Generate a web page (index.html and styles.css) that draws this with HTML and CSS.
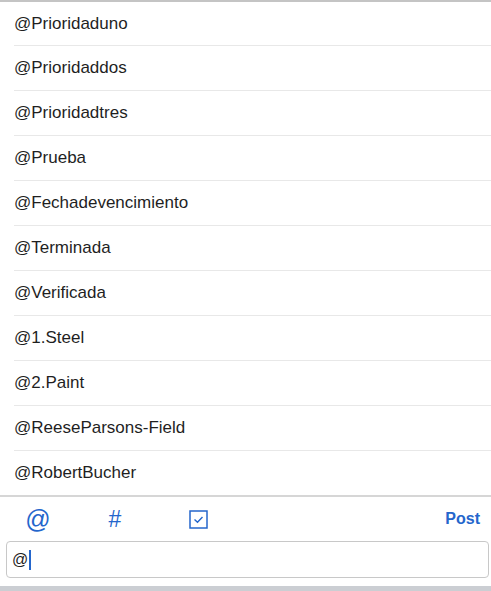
FILE: index.html
```html
<!DOCTYPE html>
<html lang="es">
<head>
    <meta charset="UTF-8">
    <meta name="viewport" content="width=device-width, initial-scale=1.0">
    <title>Menciones</title>
    <link rel="stylesheet" href="styles.css">
</head>
<body>
    <div class="screen">
        <ul class="mention-list">
            <li>@Prioridaduno</li>
            <li>@Prioridaddos</li>
            <li>@Prioridadtres</li>
            <li>@Prueba</li>
            <li>@Fechadevencimiento</li>
            <li>@Terminada</li>
            <li>@Verificada</li>
            <li>@1.Steel</li>
            <li>@2.Paint</li>
            <li>@ReeseParsons-Field</li>
            <li>@RobertBucher</li>
        </ul>

        <div class="composer">
            <div class="toolbar">
                <span class="tool tool-at">@</span>
                <span class="tool tool-hash">#</span>
                <span class="tool tool-check">
                    <svg width="19" height="19" viewBox="0 0 19 19">
                        <rect x="1" y="1" width="17" height="17" fill="none" stroke="#2466cc" stroke-width="1.5"/>
                        <path d="M5.5 9.5 L8.5 12.3 L13.5 7" fill="none" stroke="#2466cc" stroke-width="1.4"/>
                    </svg>
                </span>
                <span class="post">Post</span>
            </div>
            <div class="input-box">@<span class="caret"></span></div>
        </div>
        <div class="keyboard-edge"></div>
    </div>
</body>
</html>
```

FILE: styles.css
```css
body {
    margin: 0;
    font-family: "Liberation Sans", Arial, sans-serif;
    background-color: #ffffff;
}
.screen {
    width: 491px;
    height: 591px;
    display: flex;
    flex-direction: column;
    overflow: hidden;
    border-top: 2px solid #c4c4c4;
    box-sizing: border-box;
}
.mention-list {
    list-style: none;
    margin: 0;
    padding: 0 0 0 14px;
}
.mention-list li {
    height: 44px;
    line-height: 43px;
    font-size: 17px;
    color: #1f1f1f;
    border-bottom: 1px solid #e8e8e8;
}
.mention-list li:first-child {
    height: 43px;
}
.mention-list li:last-child {
    border-bottom: none;
}
.composer {
    border-top: 2px solid #d6d6d6;
    padding: 0 2px 0 6px;
}
.toolbar {
    height: 44px;
    display: flex;
    align-items: center;
    color: #2466cc;
}
.tool {
    display: flex;
    justify-content: center;
    align-items: center;
}
.tool-at {
    font-size: 25px;
    margin-left: 20px;
    width: 24px;
}
.tool-hash {
    font-size: 23px;
    margin-left: 56px;
    width: 18px;
}
.tool-check {
    margin-left: 65px;
}
.post {
    margin-left: auto;
    margin-right: 9px;
    font-size: 16px;
    font-weight: bold;
}
.input-box {
    height: 35px;
    border: 1px solid #c8c8c8;
    border-radius: 4px;
    display: flex;
    align-items: center;
    padding-left: 5px;
    font-size: 16px;
    color: #222222;
}
.caret {
    display: inline-block;
    width: 2px;
    height: 20px;
    margin-left: 1px;
    background-color: #2466cc;
}
.keyboard-edge {
    margin-top: auto;
    height: 5px;
    background-color: #cbced3;
}
```
